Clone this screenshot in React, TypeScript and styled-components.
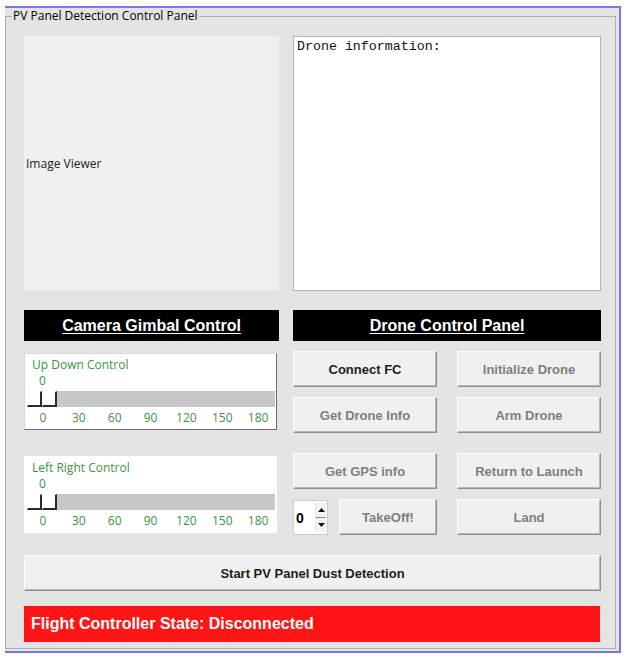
import React from "react";
import styled, { createGlobalStyle } from "styled-components";

const GlobalStyle = createGlobalStyle`
  html, body { margin: 0; padding: 0; background: #ffffff; }
  body {
    width: 629px;
    height: 661px;
    overflow: hidden;
    font-family: "Open Sans", "Noto Sans", sans-serif;
  }
`;

const Window = styled.div`
  margin: 6px 0 0 5px;
  width: 614px;
  border-top: 2px solid #7676f0;
  border-right: 2px solid #7676f0;
  border-bottom: 2px solid #7676f0;
  background: #e4e4e4;
  padding-bottom: 2px;
`;

const GroupBox = styled.fieldset`
  margin: 0 3px 0 0;
  padding: 0 6px 6px 6px;
  border: 1px solid #adadad;
  min-width: 0;
`;

const GroupTitle = styled.legend`
  padding: 0 1px;
  font-family: "Open Sans", "Noto Sans", sans-serif;
  font-size: 12px;
  line-height: 16px;
  color: #000;
`;

const Content = styled.div`
  padding: 12px 8px 0 12px;
`;

const MainGrid = styled.div`
  display: grid;
  grid-template-columns: 255px 308px;
  column-gap: 14px;
  align-items: start;
`;

const ImageViewer = styled.div`
  height: 254px;
  background: #f0f0f0;
  display: flex;
  align-items: center;
  padding-left: 2px;
  font-size: 12px;
  color: #222;
`;

const InfoBox = styled.div`
  height: 255px;
  box-sizing: border-box;
  background: #ffffff;
  border: 1px solid #b4b4b4;
  padding: 2px 3px;
  font-family: "Liberation Mono", "Courier New", monospace;
  font-size: 13.3px;
  line-height: 15px;
  color: #111;
`;

const SectionHeader = styled.div`
  margin-top: 19px;
  height: 31px;
  background: #000000;
  color: #ffffff;
  display: flex;
  align-items: center;
  justify-content: center;
  font-family: "Liberation Sans", Arial, sans-serif;
  font-weight: bold;
  font-size: 16px;
  text-decoration: underline;
  text-underline-offset: 2px;
`;

const SliderStack = styled.div`
  margin-top: 12px;
  display: flex;
  flex-direction: column;
  gap: 26px;
  width: 253px;
`;

const SliderBox = styled.div<{ $raised?: boolean }>`
  height: 77px;
  box-sizing: border-box;
  background: #ffffff;
  border: 1px solid;
  border-color: ${(p) =>
    p.$raised ? "#d8d8d8 #6c6c6c #6c6c6c #d8d8d8" : "#ffffff"};
  padding-top: 3px;
  color: #3a9640;
  font-size: 12px;
  line-height: 16px;
`;

const SliderLabel = styled.div`
  padding-left: 7px;
`;

const SliderValue = styled.div`
  padding-left: 14px;
`;

const Trough = styled.div`
  margin: 2px 1px 0 2px;
  height: 16px;
  background: #c8c8c8;
  display: flex;
`;

const ThumbCell = styled.div`
  width: 15px;
  height: 16px;
  box-sizing: border-box;
  background: #ffffff;
  border-top: 1px solid #ffffff;
  border-left: 1px solid #ffffff;
  border-right: 2px solid #2a2a2a;
  border-bottom: 2px solid #2a2a2a;
`;

const TickRow = styled.div`
  margin-top: 3px;
  display: grid;
  grid-template-columns: repeat(7, 1fr);
  text-align: center;
`;

const ButtonPanel = styled.div`
  margin-top: 10px;
  display: flex;
  flex-direction: column;
  gap: 20px;
`;

const ButtonBlock = styled.div`
  display: grid;
  grid-template-columns: 144px 144px;
  grid-auto-rows: 36px;
  column-gap: 20px;
  row-gap: 10px;
`;

const PanelButton = styled.button<{ $active?: boolean }>`
  height: 36px;
  width: 100%;
  box-sizing: border-box;
  background: #f0f0f0;
  border: 1px solid;
  border-color: #fdfdfd #8d8d8d #8d8d8d #fdfdfd;
  box-shadow: inset -1px -1px 0 #b9b9b9;
  font-family: "Liberation Sans", Arial, sans-serif;
  font-weight: bold;
  font-size: 13px;
  color: ${(p) => (p.$active ? "#1c1c1c" : "#7e7e7e")};
  padding: 0;
  cursor: default;
`;

const TakeOffCell = styled.div`
  display: flex;
  align-items: center;
  gap: 11px;
`;

const SpinBox = styled.div`
  width: 35px;
  height: 35px;
  margin-top: 1px;
  box-sizing: border-box;
  background: #ffffff;
  border: 1px solid #cdcdcd;
  display: flex;
  align-items: center;
  justify-content: space-between;
  padding: 0 1px 0 2px;
  flex-shrink: 0;
`;

const SpinValue = styled.span`
  font-family: "Liberation Sans", Arial, sans-serif;
  font-weight: bold;
  font-size: 14px;
  color: #000;
`;

const SpinArrows = styled.div`
  width: 10px;
  height: 29px;
  display: flex;
  flex-direction: column;
  border-left: 1px solid #e6e6e6;
`;

const SpinArrow = styled.div<{ $top?: boolean }>`
  flex: 1;
  display: flex;
  align-items: center;
  justify-content: center;
  background: #f4f4f4;
  border-bottom: ${(p) => (p.$top ? "1px solid #8a8a8a" : "none")};
`;

const StartButton = styled(PanelButton)`
  margin-top: 20px;
  width: 577px;
`;

const StatusBar = styled.div`
  margin-top: 15px;
  width: 576px;
  height: 36px;
  box-sizing: border-box;
  background: #ff1515;
  color: #ffffff;
  display: flex;
  align-items: center;
  padding-left: 7px;
  font-family: "Liberation Sans", Arial, sans-serif;
  font-weight: bold;
  font-size: 16px;
`;

const ticks = ["0", "30", "60", "90", "120", "150", "180"];

function Slider({ label, raised }: { label: string; raised?: boolean }) {
  return (
    <SliderBox $raised={raised}>
      <SliderLabel>{label}</SliderLabel>
      <SliderValue>0</SliderValue>
      <Trough>
        <ThumbCell />
        <ThumbCell />
      </Trough>
      <TickRow>
        {ticks.map((t) => (
          <span key={t}>{t}</span>
        ))}
      </TickRow>
    </SliderBox>
  );
}

function Arrow({ up }: { up?: boolean }) {
  return (
    <svg width="7" height="4" viewBox="0 0 7 4">
      <polygon points={up ? "0,4 7,4 3.5,0" : "0,0 7,0 3.5,4"} fill="#111" />
    </svg>
  );
}

export default function App() {
  return (
    <>
      <GlobalStyle />
      <Window>
        <GroupBox>
          <GroupTitle>PV Panel Detection Control Panel</GroupTitle>
          <Content>
            <MainGrid>
              <ImageViewer>Image Viewer</ImageViewer>
              <InfoBox>Drone information:</InfoBox>
              <SectionHeader>Camera Gimbal Control</SectionHeader>
              <SectionHeader>Drone Control Panel</SectionHeader>
              <SliderStack>
                <Slider label="Up Down Control" raised />
                <Slider label="Left Right Control" />
              </SliderStack>
              <ButtonPanel>
                <ButtonBlock>
                  <PanelButton $active>Connect FC</PanelButton>
                  <PanelButton>Initialize Drone</PanelButton>
                  <PanelButton>Get Drone Info</PanelButton>
                  <PanelButton>Arm Drone</PanelButton>
                </ButtonBlock>
                <ButtonBlock>
                  <PanelButton>Get GPS info</PanelButton>
                  <PanelButton>Return to Launch</PanelButton>
                  <TakeOffCell>
                    <SpinBox>
                      <SpinValue>0</SpinValue>
                      <SpinArrows>
                        <SpinArrow $top>
                          <Arrow up />
                        </SpinArrow>
                        <SpinArrow>
                          <Arrow />
                        </SpinArrow>
                      </SpinArrows>
                    </SpinBox>
                    <PanelButton>TakeOff!</PanelButton>
                  </TakeOffCell>
                  <PanelButton>Land</PanelButton>
                </ButtonBlock>
              </ButtonPanel>
            </MainGrid>
            <StartButton $active>Start PV Panel Dust Detection</StartButton>
            <StatusBar>Flight Controller State: Disconnected</StatusBar>
          </Content>
        </GroupBox>
      </Window>
    </>
  );
}
